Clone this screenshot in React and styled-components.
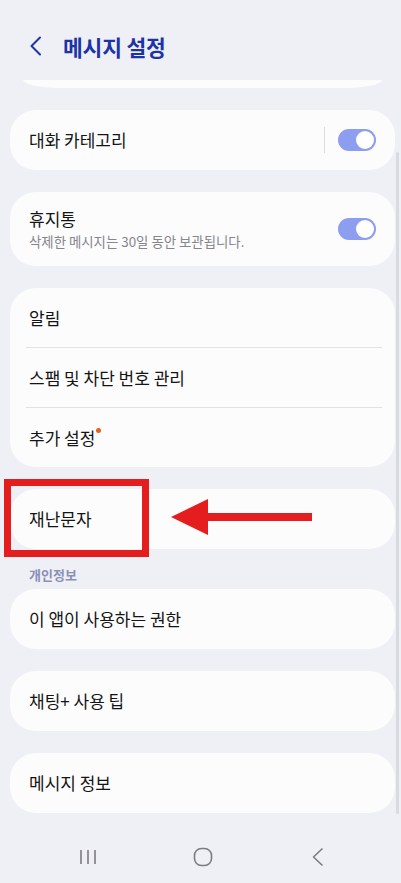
import React from "react";
import styled, { createGlobalStyle } from "styled-components";

const GlobalStyle = createGlobalStyle`
  html, body {
    margin: 0;
    padding: 0;
    background: #eff0f5;
  }
  * {
    box-sizing: border-box;
  }
`;

const FONT = `"Noto Sans CJK KR", "Noto Sans", Roboto, sans-serif`;

const groups = [
  { rows: [{ label: "알림" }, { label: "스팸 및 차단 번호 관리" }, { label: "추가 설정", dot: true }] },
];

const App = () => {
  return (
    <>
      <GlobalStyle />
      <Screen>
        <Header>
          <BackButton>
            <svg width="14" height="20" viewBox="0 0 14 20">
              <path
                d="M11 1.5 L2.5 10 L11 18.5"
                fill="none"
                stroke="#1c34a6"
                strokeWidth="2"
                strokeLinecap="round"
                strokeLinejoin="round"
              />
            </svg>
          </BackButton>
          <Title>메시지 설정</Title>
        </Header>

        <List>
          <TailCard />

          <Card>
            <Row>
              <Label>대화 카테고리</Label>
              <Divider />
              <Toggle />
            </Row>
          </Card>

          <Card>
            <Row $tall>
              <TextBlock>
                <Label>휴지통</Label>
                <Sub>삭제한 메시지는 30일 동안 보관됩니다.</Sub>
              </TextBlock>
              <Toggle />
            </Row>
          </Card>

          {groups.map((g, i) => (
            <Card key={i}>
              {g.rows.map((r, j) => (
                <React.Fragment key={r.label}>
                  {j > 0 && <RowLine />}
                  <Row $compact>
                    <Label>
                      {r.label}
                      {r.dot && <Dot />}
                    </Label>
                  </Row>
                </React.Fragment>
              ))}
            </Card>
          ))}

          <Card>
            <Row>
              <Label>재난문자</Label>
            </Row>
          </Card>

          <SectionLabel>개인정보</SectionLabel>
          <Card>
            <Row>
              <Label>이 앱이 사용하는 권한</Label>
            </Row>
          </Card>

          <Card>
            <Row>
              <Label>채팅+ 사용 팁</Label>
            </Row>
          </Card>

          <Card>
            <Row>
              <Label>메시지 정보</Label>
            </Row>
          </Card>
        </List>

        <NavBar>
          <NavItem>
            <svg width="18" height="16" viewBox="0 0 18 16">
              <path d="M2 1v14M9 1v14M16 1v14" stroke="#7c7c80" strokeWidth="1.6" />
            </svg>
          </NavItem>
          <NavItem>
            <svg width="20" height="20" viewBox="0 0 20 20">
              <rect x="1.5" y="1.5" width="17" height="17" rx="7" fill="none" stroke="#7c7c80" strokeWidth="1.6" />
            </svg>
          </NavItem>
          <NavItem>
            <svg width="12" height="20" viewBox="0 0 12 20">
              <path d="M10.5 1.5 L1.5 10 L10.5 18.5" fill="none" stroke="#7c7c80" strokeWidth="1.6" strokeLinejoin="round" />
            </svg>
          </NavItem>
        </NavBar>

        <ScrollThumb />

        {/* red annotation drawn over the screenshot */}
        <HighlightBox />
        <Arrow width="142" height="36" viewBox="0 0 142 36">
          <path d="M0 18 L37 0 L37 14 L141 14 L141 22 L37 22 L37 36 Z" fill="#e41d1f" />
        </Arrow>
      </Screen>
    </>
  );
};

const Screen = styled.div`
  position: relative;
  width: 401px;
  height: 883px;
  overflow: hidden;
  display: flex;
  flex-direction: column;
  background: #eff0f5;
  font-family: ${FONT};
  color: #141414;
`;

const Header = styled.div`
  height: 80px;
  padding: 12px 0 0 29px;
  display: flex;
  align-items: center;
  gap: 20px;
`;

const BackButton = styled.div`
  display: flex;
  align-items: center;
  width: 14px;
`;

const Title = styled.h1`
  margin: 0;
  font-size: 21.5px;
  font-weight: 700;
  color: #1c34a6;
  letter-spacing: -0.2px;
`;

const List = styled.div`
  display: flex;
  flex-direction: column;
  padding: 0 6px 0 10px;
`;

const TailCard = styled.div`
  height: 8px;
  margin: 0 13px 0 13px;
  background: #fcfcfd;
  border-radius: 0 0 40px 40px / 0 0 8px 8px;
`;

const Card = styled.div`
  margin-top: 22px;
  background: #fcfcfd;
  border-radius: 26px;
  overflow: hidden;
`;

const SectionLabel = styled.div`
  padding: 17px 0 5px 19px;
  font-size: 13px;
  font-weight: 700;
  line-height: 18px;
  color: #8a8fb8;

  & + ${Card} {
    margin-top: 0;
  }
`;

const Row = styled.div`
  display: flex;
  align-items: center;
  height: ${(p) => (p.$tall ? "74px" : p.$compact ? "59px" : "60px")};
  padding: 0 19px;
`;

const TextBlock = styled.div`
  display: flex;
  flex-direction: column;
  flex: 1;
`;

const Label = styled.div`
  flex: 1;
  position: relative;
  font-size: 17px;
  line-height: 22px;
  color: #141414;
`;

const Sub = styled.div`
  margin-top: 2px;
  font-size: 13.4px;
  line-height: 18px;
  color: #85858a;
`;

const Dot = styled.span`
  display: inline-block;
  width: 5px;
  height: 5px;
  margin-left: 1px;
  border-radius: 50%;
  background: #ea6019;
  vertical-align: 12px;
`;

const RowLine = styled.div`
  height: 1px;
  margin: 0 13px 0 16px;
  background: #e2e2e6;
`;

const Divider = styled.div`
  width: 1.5px;
  height: 26px;
  margin-right: 13px;
  background: #dcdcdf;
`;

const Toggle = styled.div`
  position: relative;
  width: 38px;
  height: 22px;
  border-radius: 11px;
  background: #8d9df0;

  &::after {
    content: "";
    position: absolute;
    top: 2px;
    right: 2px;
    width: 18px;
    height: 18px;
    border-radius: 50%;
    background: #ffffff;
  }
`;

const NavBar = styled.div`
  margin-top: auto;
  height: 48px;
  padding: 0 30px 4px;
  display: grid;
  grid-template-columns: repeat(3, 115px);
  align-items: center;
`;

const NavItem = styled.div`
  display: flex;
  justify-content: center;
  align-items: center;
`;

const ScrollThumb = styled.div`
  position: absolute;
  top: 152px;
  right: 2px;
  width: 3px;
  height: 662px;
  border-radius: 2px;
  background: #dadbe1;
`;

const HighlightBox = styled.div`
  position: absolute;
  left: 4px;
  top: 479px;
  width: 145px;
  height: 78px;
  border: 7px solid #e41d1f;
`;

const Arrow = styled.svg`
  position: absolute;
  left: 171px;
  top: 499px;
`;

export default App;
